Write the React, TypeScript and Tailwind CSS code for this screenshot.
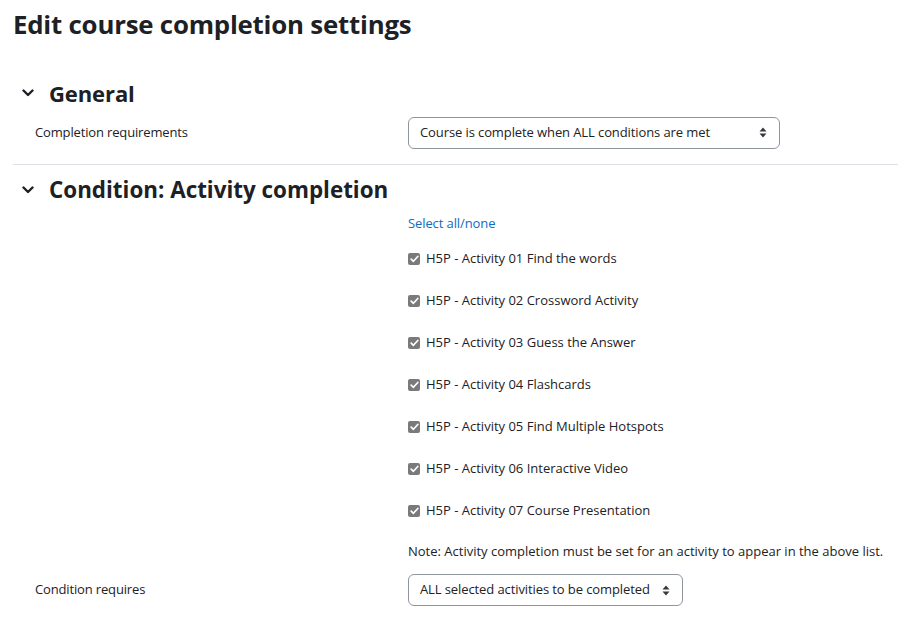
import React from "react";

const font = { fontFamily: '"Open Sans", "Noto Sans", sans-serif' };

function Chevron() {
  return (
    <svg width="12" height="8" viewBox="0 0 12 8" className="shrink-0">
      <path d="M1.5 1.5 L6 6 L10.5 1.5" fill="none" stroke="#1d2125" strokeWidth="2.4" strokeLinecap="round" strokeLinejoin="round" />
    </svg>
  );
}

function SelectArrows() {
  return (
    <svg width="8" height="11" viewBox="0 0 8 11" className="shrink-0">
      <path d="M4 0.5 L7.5 4.5 H0.5 Z" fill="#343a40" />
      <path d="M4 10.5 L7.5 6.5 H0.5 Z" fill="#343a40" />
    </svg>
  );
}

function Select({ text, width }: { text: string; width: string }) {
  return (
    <div className={`${width} h-[32px] border border-[#8f959e] rounded-[6px] flex items-center justify-between pl-[11px] pr-[12px] text-[13px] tracking-[-0.1px] text-[#1d2125] whitespace-nowrap`}>
      <span>{text}</span>
      <SelectArrows />
    </div>
  );
}

function Check({ label }: { label: string }) {
  return (
    <div className="flex items-center h-[42px] text-[13px] text-[#1d2125]">
      <span className="w-[12px] h-[12px] rounded-[2px] bg-[#7a7a7a] flex items-center justify-center mr-[6px]">
        <svg width="9" height="8" viewBox="0 0 9 8">
          <path d="M1.2 4.2 L3.4 6.3 L7.8 1.5" fill="none" stroke="#fff" strokeWidth="1.7" strokeLinecap="round" strokeLinejoin="round" />
        </svg>
      </span>
      <span>{label}</span>
    </div>
  );
}

export default function App() {
  const items = [
    "H5P - Activity 01 Find the words",
    "H5P - Activity 02 Crossword Activity",
    "H5P - Activity 03 Guess the Answer",
    "H5P - Activity 04 Flashcards",
    "H5P - Activity 05 Find Multiple Hotspots",
    "H5P - Activity 06 Interactive Video",
    "H5P - Activity 07 Course Presentation",
  ];
  return (
    <div className="w-[898px] h-[618px] bg-white overflow-hidden pl-[13px] text-[#1d2125]" style={font}>
      <h1 className="text-[25.8px] font-bold leading-none pt-[12px] tracking-[-0.2px]">Edit course completion settings</h1>

      <div className="flex items-center gap-[15px] pl-[9px] mt-[44px]">
        <Chevron />
        <span className="text-[22px] font-bold leading-none tracking-[-0.1px]">General</span>
      </div>

      <div className="flex items-center mt-[13px]">
        <div className="w-[395px] pl-[22px] text-[13px] tracking-[-0.15px]">Completion requirements</div>
        <Select text="Course is complete when ALL conditions are met" width="w-[372px]" />
      </div>

      <div className="h-px bg-[#dee2e6] mt-[15px]" />

      <div className="flex items-center gap-[15px] pl-[9px] mt-[14px]">
        <Chevron />
        <span className="text-[22.4px] font-bold leading-none">Condition: Activity completion</span>
      </div>

      <div className="pl-[395px] mt-[16px] text-[13px]">
        <div className="text-[#0f6cbf] leading-none tracking-[-0.1px]">Select all/none</div>
        <div className="mt-[8px]">
          {items.map((t) => (
            <Check key={t} label={t} />
          ))}
        </div>
        <div className="mt-[13px] leading-none whitespace-nowrap">Note: Activity completion must be set for an activity to appear in the above list.</div>
      </div>

      <div className="flex items-center mt-[16px]">
        <div className="w-[395px] pl-[22px] text-[13px] tracking-[-0.15px]">Condition requires</div>
        <Select text="ALL selected activities to be completed" width="w-[275px]" />
      </div>
    </div>
  );
}
